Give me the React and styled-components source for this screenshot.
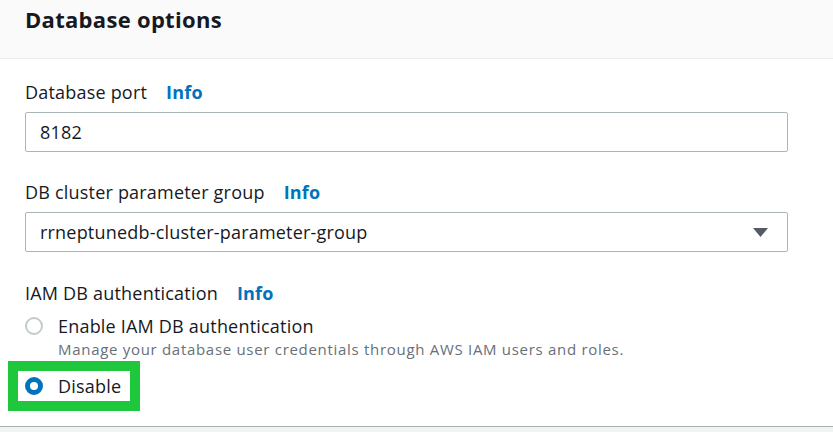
import React from 'react';
import styled, { createGlobalStyle } from 'styled-components';

const GlobalStyle = createGlobalStyle`
  html, body {
    margin: 0;
    padding: 0;
    background: #f2f3f3;
  }
  body {
    font-family: "Open Sans", "Noto Sans", sans-serif;
    color: #16191f;
    letter-spacing: 0.2px;
  }
`;

const Panel = styled.section`
  background: #fff;
  border-bottom: 1px solid #a3afb1;
  width: 833px;
`;

const Header = styled.header`
  background: #fafafa;
  border-bottom: 1px solid #eaeded;
  padding: 5px 25px 25px;

  h2 {
    margin: 0;
    font-size: 22px;
    line-height: 28px;
    font-weight: 700;
    letter-spacing: 0.3px;
  }
`;

const Body = styled.div`
  padding: 21px 25px 15px;
  width: 763px;
`;

const Field = styled.div`
  margin-bottom: ${(p) => p.$gap || 0}px;
`;

const Label = styled.div`
  display: flex;
  align-items: center;
  gap: 19px;
  font-size: 18px;
  line-height: 24px;
  margin-bottom: ${(p) => p.$gap || 8}px;
`;

const Info = styled.a`
  color: #0073bb;
  font-weight: 700;
  text-decoration: none;
`;

const Box = styled.div`
  box-sizing: border-box;
  height: 40px;
  border: 1px solid #aab7b8;
  border-radius: 2px;
  display: flex;
  align-items: center;
  justify-content: space-between;
  padding: 0 19px 0 14px;
  font-size: 18px;
`;

const Option = styled.label`
  display: flex;
  align-items: flex-start;
  gap: 15px;
`;

const Radio = styled.span`
  box-sizing: border-box;
  flex: none;
  width: 18px;
  height: 18px;
  margin-top: 3px;
  border-radius: 50%;
  background: #fff;
  border: ${(p) => (p.$checked ? '5px solid #0073bb' : '2px solid #c2cbcc')};
`;

const OptionText = styled.div`
  font-size: 18px;
  line-height: 24px;
`;

const Hint = styled.div`
  font-size: 15px;
  line-height: 22px;
  letter-spacing: 0.7px;
  color: #687078;
`;

const Highlight = styled.div`
  display: inline-block;
  margin-left: -17px;
  margin-top: 1px;
  padding: 3px 9px 3px 7px;
  border: 10px solid #1ec73c;
`;

const Caret = () => (
  <svg width="15" height="9" viewBox="0 0 15 9">
    <path d="M0 0h15L7.5 9z" fill="#545b64" />
  </svg>
);

export default function App() {
  return (
    <>
      <GlobalStyle />
      <Panel>
        <Header>
          <h2>Database options</h2>
        </Header>
        <Body>
          <Field $gap={28}>
            <Label>
              Database port <Info>Info</Info>
            </Label>
            <Box>8182</Box>
          </Field>
          <Field $gap={29}>
            <Label>
              DB cluster parameter group <Info>Info</Info>
            </Label>
            <Box>
              rrneptunedb-cluster-parameter-group
              <Caret />
            </Box>
          </Field>
          <Field>
            <Label $gap={9}>
              IAM DB authentication <Info>Info</Info>
            </Label>
            <Option>
              <Radio />
              <div>
                <OptionText>Enable IAM DB authentication</OptionText>
                <Hint>Manage your database user credentials through AWS IAM users and roles.</Hint>
              </div>
            </Option>
            <Highlight>
              <Option>
                <Radio $checked />
                <OptionText>Disable</OptionText>
              </Option>
            </Highlight>
          </Field>
        </Body>
      </Panel>
    </>
  );
}
